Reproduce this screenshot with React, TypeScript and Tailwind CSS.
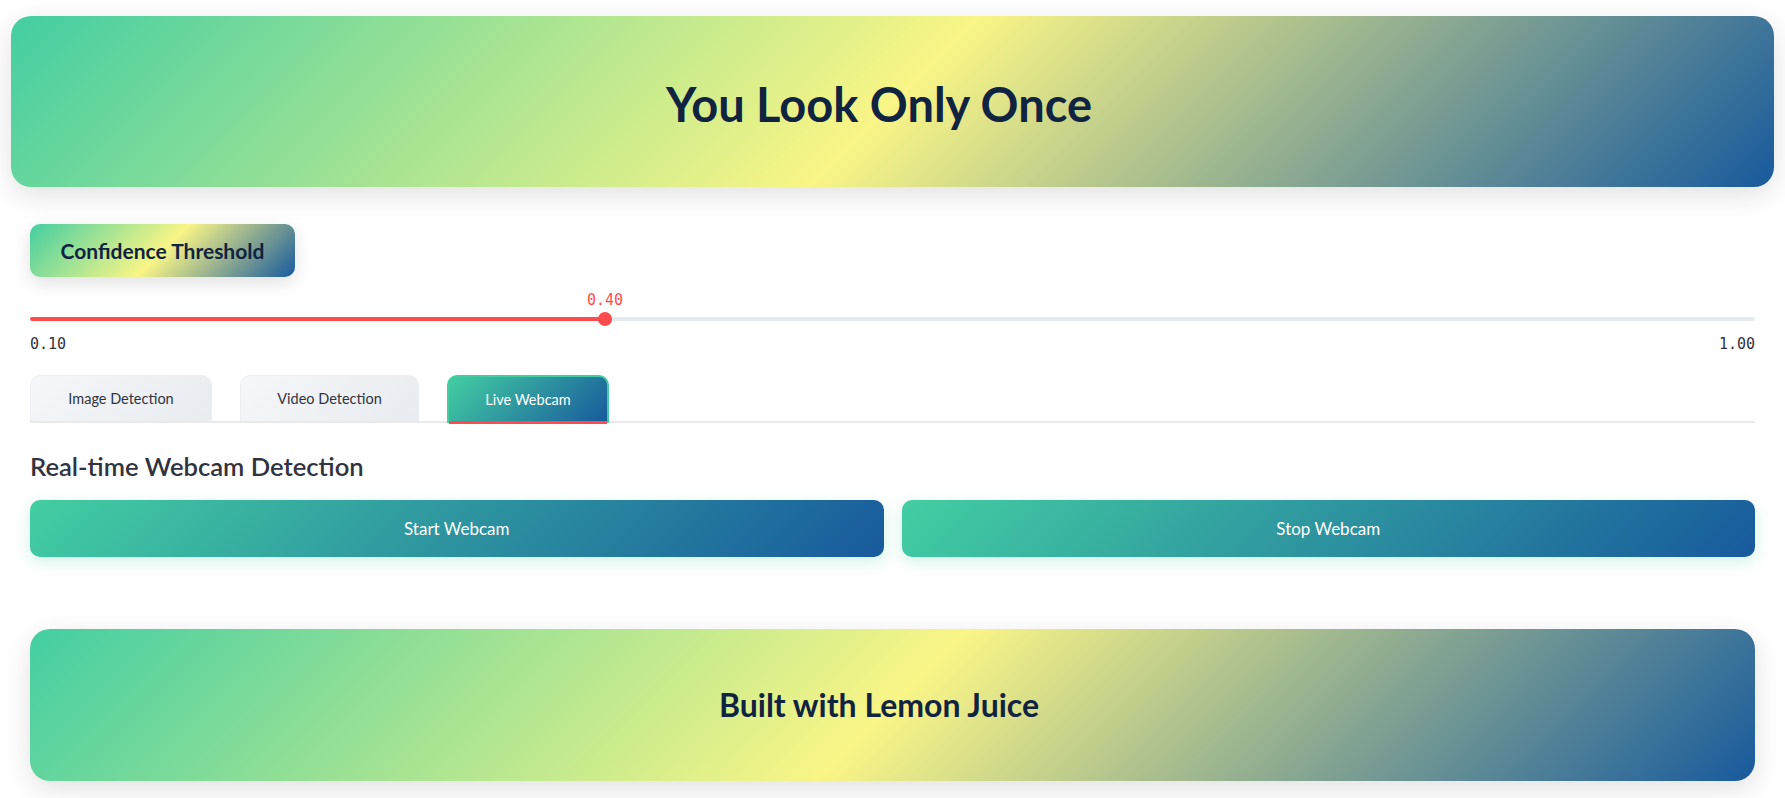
import { useState } from "react";

const MIN = 0.1;
const MAX = 1.0;

const App = () => {
  const [conf] = useState<number>(0.4);
  const [tab, setTab] = useState<string>("Live Webcam");
  const pct = ((conf - MIN) / (MAX - MIN)) * 100;

  const tabs = [
    { name: "Image Detection", w: "w-[182px]" },
    { name: "Video Detection", w: "w-[179px]" },
    { name: "Live Webcam", w: "w-[162px]" },
  ];

  return (
    <div className="min-h-[798px] bg-white px-[11px] pt-[16px] pb-[18px] font-['Lato',sans-serif] text-[#31333f]">
      {/* -------- Header -------- */}
      <div className="flex h-[171px] items-center justify-center rounded-[20px] bg-[linear-gradient(135deg,#43cea2_0%,#f9f586_50%,#185a9d_100%)] shadow-[0_8px_28px_rgba(0,0,0,0.12)]">
        <h1 className="pr-[27px] pt-[5px] text-[47px] font-bold leading-none text-[#102341]">You Look Only Once</h1>
      </div>

      <div className="px-[19px]">
        {/* -------- Confidence -------- */}
        <div className="mt-[37px] flex h-[53px] w-[265px] items-center justify-center rounded-[10px] bg-[linear-gradient(135deg,#43cea2_0%,#f9f586_50%,#185a9d_100%)] shadow-[0_6px_18px_rgba(0,0,0,0.12)]">
          <span className="text-[21px] font-bold text-[#102341]">Confidence Threshold</span>
        </div>

        {/* -------- Slider -------- */}
        <div className="mt-[13px]">
          <div className="relative h-[22px]">
            <span
              className="absolute top-[1px] -translate-x-1/2 font-['DejaVu_Sans_Mono',monospace] text-[15px] leading-[18px] text-[#ff4b4b]"
              style={{ left: `${pct}%` }}
            >
              {conf.toFixed(2)}
            </span>
          </div>
          <div className="relative mt-[5px] h-[4px] rounded-full bg-[#e6e9ef]">
            <div className="h-full rounded-full bg-[#ff4b4b]" style={{ width: `${pct}%` }} />
            <div
              className="absolute top-1/2 h-[14px] w-[14px] -translate-x-1/2 -translate-y-1/2 rounded-full bg-[#ff4b4b]"
              style={{ left: `${pct}%` }}
            />
          </div>
          <div className="mt-[14px] flex justify-between font-['DejaVu_Sans_Mono',monospace] text-[15px] leading-[18px] text-[#31333f]">
            <span>{MIN.toFixed(2)}</span>
            <span>{MAX.toFixed(2)}</span>
          </div>
        </div>

        {/* -------- Tabs -------- */}
        <div className="mt-[22px] flex gap-[28px] border-b-2 border-[#e8e9ec]">
          {tabs.map((t) =>
            t.name === tab ? (
              <button
                key={t.name}
                onClick={() => setTab(t.name)}
                className={`relative -mb-[2px] flex h-[48px] ${t.w} items-center justify-center rounded-t-[10px] border-2 border-b-0 border-[#43cea2] bg-[linear-gradient(135deg,#43cea2_0%,#185a9d_100%)] text-[14.5px] text-white`}
              >
                {t.name}
                <span className="absolute -bottom-[1px] left-0 right-0 h-[3px] bg-[#ff4b4b]" />
              </button>
            ) : (
              <button
                key={t.name}
                onClick={() => setTab(t.name)}
                className={`flex h-[46px] ${t.w} items-center justify-center rounded-t-[10px] border border-b-0 border-[#eceef1] bg-[linear-gradient(135deg,#f5f7fa_0%,#e8ebef_100%)] text-[14.5px] text-[#31333f]`}
              >
                {t.name}
              </button>
            )
          )}
        </div>

        {/* -------- Webcam -------- */}
        <h3 className="mt-[27px] text-[25.6px] font-semibold leading-[32px] text-[#31333f]">Real-time Webcam Detection</h3>
        <div className="mt-[18px] grid grid-cols-2 gap-[18px]">
          <button className="h-[57px] rounded-[10px] bg-[linear-gradient(135deg,#43cea2_0%,#185a9d_100%)] text-[17px] text-white shadow-[0_5px_16px_rgba(67,206,162,0.25)]">
            Start Webcam
          </button>
          <button className="h-[57px] rounded-[10px] bg-[linear-gradient(135deg,#43cea2_0%,#185a9d_100%)] text-[17px] text-white shadow-[0_5px_16px_rgba(67,206,162,0.25)]">
            Stop Webcam
          </button>
        </div>

        {/* -------- Footer -------- */}
        <div className="mt-[72px] flex h-[152px] items-center justify-center rounded-[20px] bg-[linear-gradient(135deg,#43cea2_0%,#f9f586_50%,#185a9d_100%)] shadow-[0_8px_28px_rgba(0,0,0,0.12)]">
          <span className="pr-[27px] text-[32px] font-bold text-[#102341]">Built with Lemon Juice</span>
        </div>
      </div>
    </div>
  );
};

export default App;
